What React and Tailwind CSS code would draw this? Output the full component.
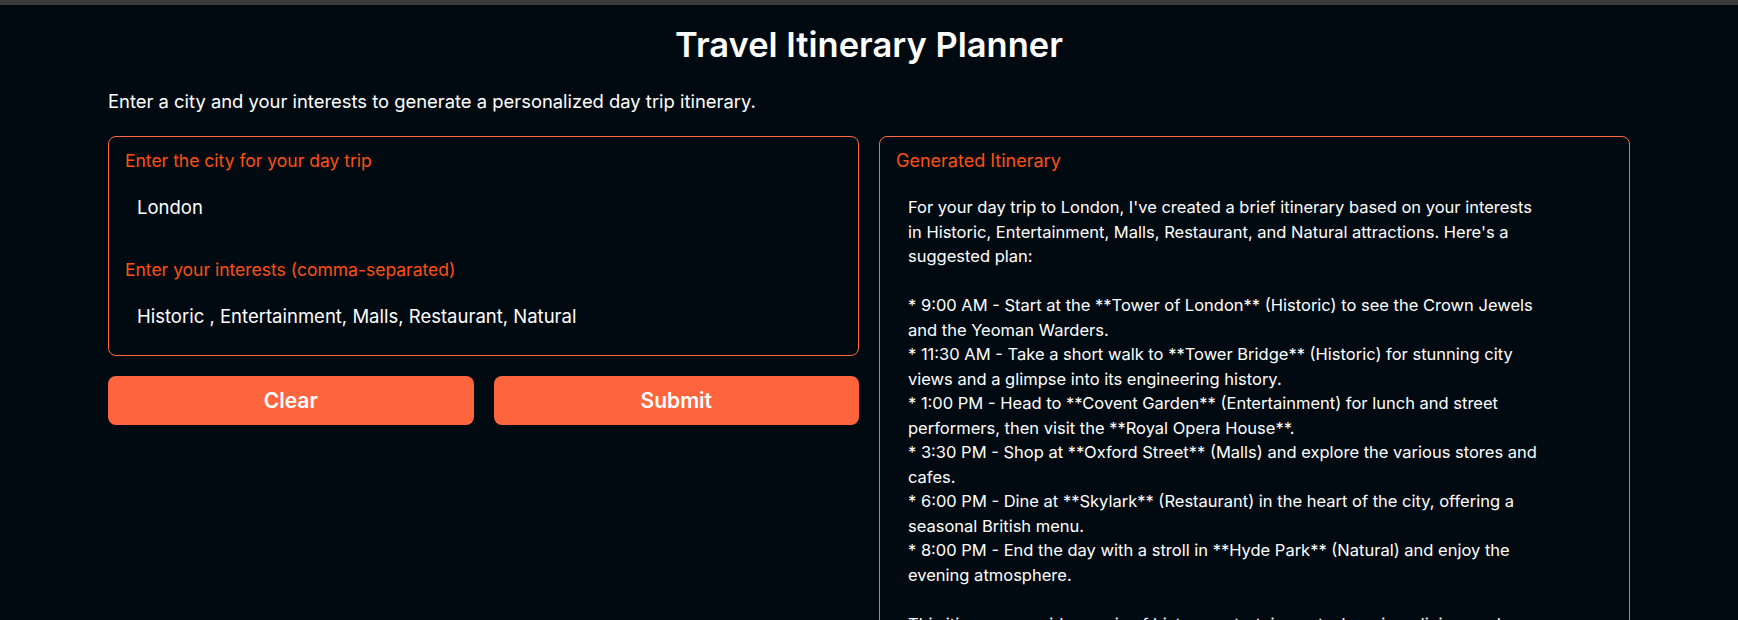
const itinerary = [
  "For your day trip to London, I've created a brief itinerary based on your interests",
  "in Historic, Entertainment, Malls, Restaurant, and Natural attractions. Here's a",
  "suggested plan:",
  "",
  "* 9:00 AM - Start at the **Tower of London** (Historic) to see the Crown Jewels",
  "and the Yeoman Warders.",
  "* 11:30 AM - Take a short walk to **Tower Bridge** (Historic) for stunning city",
  "views and a glimpse into its engineering history.",
  "* 1:00 PM - Head to **Covent Garden** (Entertainment) for lunch and street",
  "performers, then visit the **Royal Opera House**.",
  "* 3:30 PM - Shop at **Oxford Street** (Malls) and explore the various stores and",
  "cafes.",
  "* 6:00 PM - Dine at **Skylark** (Restaurant) in the heart of the city, offering a",
  "seasonal British menu.",
  "* 8:00 PM - End the day with a stroll in **Hyde Park** (Natural) and enjoy the",
  "evening atmosphere.",
  "",
  "This itinerary provides a mix of history, entertainment, shopping, dining, and",
];

function Field({ label, value }) {
  return (
    <div className="flex flex-col gap-[10px]">
      <label className="text-[17.5px] leading-6 text-[#fc4f12]">{label}</label>
      <div className="px-3 py-3 text-[18.5px] leading-6 text-white">{value}</div>
    </div>
  );
}

export default function App() {
  return (
    <div className="h-[620px] overflow-hidden bg-[#020a11] font-['Inter',sans-serif] text-white">
      <div className="h-[5px] bg-[#3b3b3b]" />
      <div className="mx-auto w-[1522px] pt-5">
        <h1 className="text-center text-[34.5px] font-semibold leading-10">Travel Itinerary Planner</h1>
        <p className="mt-6 text-[18.4px] leading-6">
          Enter a city and your interests to generate a personalized day trip itinerary.
        </p>

        <div className="mt-[23px] grid grid-cols-2 gap-5">
          <div className="flex flex-col gap-5">
            <div className="flex flex-col gap-[27px] rounded-lg border border-[#ff6a3d] px-4 pt-3 pb-[15px]">
              <Field label="Enter the city for your day trip" value="London" />
              <Field
                label="Enter your interests (comma-separated)"
                value="Historic , Entertainment, Malls, Restaurant, Natural"
              />
            </div>
            <div className="grid grid-cols-2 gap-5">
              <button className="h-[49px] rounded-lg bg-[#ff653d] text-[21px] font-semibold text-white">Clear</button>
              <button className="h-[49px] rounded-lg bg-[#ff653d] text-[21px] font-semibold text-white">Submit</button>
            </div>
          </div>

          <div className="rounded-lg border border-[#ff6a3d] px-4 pt-3 pb-6">
            <div className="text-[18px] leading-6 text-[#fc4f12]">Generated Itinerary</div>
            <div className="mt-[10px] px-3 py-3 text-[16.5px] leading-[24.5px] text-white">
              {itinerary.map((line, i) => (
                <div key={i} className="min-h-[24.5px] whitespace-nowrap">{line}</div>
              ))}
            </div>
          </div>
        </div>
      </div>
    </div>
  );
}
